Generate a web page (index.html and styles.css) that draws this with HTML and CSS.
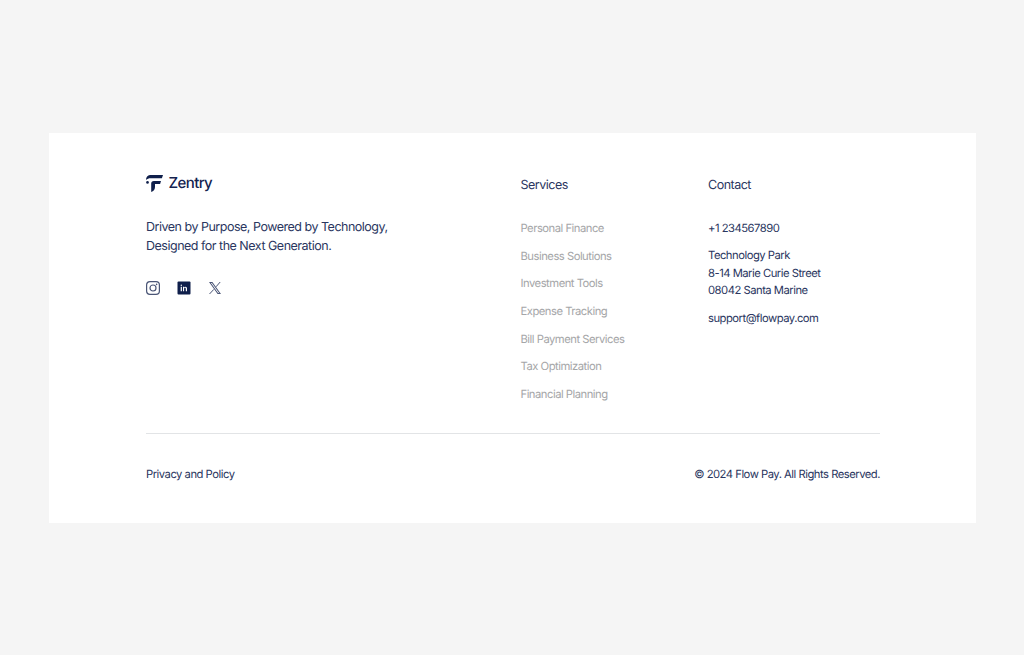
FILE: index.html
```html
<!DOCTYPE html>
<html lang="en">
<head>
<meta charset="utf-8">
<title>Zentry Footer</title>
<link rel="stylesheet" href="styles.css">
</head>
<body>
<footer class="footer">
  <div class="top">
    <div class="brand">
      <div class="logo">
        <svg class="logo-mark" viewBox="0 0 17 17" width="17" height="17" aria-hidden="true">
          <path d="M4 0H17l-1.100 3.200H4.500C2.800 3.200 1.200 3.700 0 5 0 2.200 1.600 0 4 0Z" fill="#0f1f4b"/>
          <path d="M7.800 6h7.200l-.9 3H9v3c0 2.600-1.500 4.300-3.800 5V8.600A2.600 2.600 0 0 1 7.800 6Z" fill="#0f1f4b"/>
          <circle cx="1.500" cy="7.400" r="1.300" fill="#0f1f4b"/>
        </svg>
        <span class="logo-name">Zentry</span>
      </div>
      <p class="tagline">Driven by Purpose, Powered by Technology,<br>Designed for the Next Generation.</p>
      <div class="social">
        <svg class="icon" viewBox="0 0 14 14" width="14" height="14" aria-label="Instagram">
          <rect x="0.6" y="0.6" width="12.8" height="12.8" rx="3.4" fill="none" stroke="#4a5576" stroke-width="1.200"/>
          <circle cx="7" cy="7" r="3" fill="none" stroke="#4a5576" stroke-width="1.200"/>
          <circle cx="10.6" cy="3.4" r="0.8" fill="#4a5576"/>
        </svg>
        <svg class="icon" viewBox="0 0 14 14" width="14" height="14" aria-label="LinkedIn">
          <rect width="13" height="13" x="0.5" y="0.5" rx="1" fill="#0f1f4b"/>
          <path d="M3.7 5.8h1.200v4.500H3.700ZM3.600 4.200a.7.7 0 1 1 1.400 0 .7.7 0 0 1-1.400 0ZM6 5.800h1.100v.6c.3-.4.7-.7 1.300-.7 1.200 0 1.600.8 1.600 1.900v2.700H8.800V7.900c0-.6-.2-1.100-.8-1.100s-.9.5-.9 1.100v2.400H6Z" fill="#fff"/>
        </svg>
        <svg class="icon" viewBox="0 0 14 14" width="14" height="14" aria-label="X">
          <path d="M1 1h3.400l8.600 12H9.600ZM2.900 2l7.200 10h1L3.900 2Z" fill="#4a5576" fill-rule="evenodd"/>
          <path d="M12.200 1 8 5.800M5.800 8.400 1.500 13" fill="none" stroke="#4a5576" stroke-width="1"/>
        </svg>
      </div>
    </div>
    <nav class="col services">
      <h3 class="col-title">Services</h3>
      <ul class="links">
        <li>Personal Finance</li>
        <li>Business Solutions</li>
        <li>Investment Tools</li>
        <li>Expense Tracking</li>
        <li>Bill Payment Services</li>
        <li>Tax Optimization</li>
        <li>Financial Planning</li>
      </ul>
    </nav>
    <div class="col contact">
      <h3 class="col-title">Contact</h3>
      <div class="contact-list">
        <p>+1 234567890</p>
        <p>Technology Park<br>8-14 Marie Curie Street<br>08042 Santa Marine</p>
        <p>support@flowpay.com</p>
      </div>
    </div>
  </div>
  <div class="bottom">
    <span>Privacy and Policy</span>
    <span>© 2024 Flow Pay. All Rights Reserved.</span>
  </div>
</footer>
</body>
</html>
```
FILE: styles.css
```css
* { box-sizing: border-box; }
html, body { margin: 0; padding: 0; }
body {
  width: 1024px;
  height: 655px;
  background: #f5f5f5;
  padding: 133px 48px 0 49px;
  font-family: Inter, "Liberation Sans", sans-serif;
  color: #2a3660;
  overflow: hidden;
  text-rendering: geometricPrecision;
}
.footer {
  background: #fff;
  width: 927px;
  height: 390px;
  padding: 41px 96px 0 97px;
}
.top {
  display: flex;
  height: 260px;
  border-bottom: 1px solid #e2e4e6;
}
.brand { width: 374.5px; }
.logo { display: flex; align-items: center; gap: 5.5px; height: 18px; }
.logo-mark { display: block; }
.logo-name {
  font-size: 15px;
  font-weight: 500;
  line-height: 18px;
  color: #14234f;
  letter-spacing: -0.6px;
}
.tagline {
  margin: 26px 0 0;
  font-size: 12.5px;
  line-height: 19px;
  letter-spacing: -0.49px;
}
.social { display: flex; gap: 17px; margin-top: 25px; }
.icon { display: block; }
.col-title {
  margin: 2px 0 0;
  font-size: 12.5px;
  font-weight: 400;
  line-height: 20px;
  letter-spacing: -0.5px;
}
.services { width: 187.5px; }
.links {
  list-style: none;
  margin: 23px 0 0;
  padding: 0;
  display: flex;
  flex-direction: column;
  gap: 9.7px;
  font-size: 11.25px;
  line-height: 18px;
  letter-spacing: -0.5px;
  color: #a5a6a8;
}
.contact-list {
  margin-top: 23.5px;
  display: flex;
  flex-direction: column;
  gap: 10.25px;
  font-size: 11.25px;
  line-height: 17.5px;
  letter-spacing: -0.5px;
}
.contact-list p { margin: 0; }
.bottom {
  display: flex;
  justify-content: space-between;
  margin-top: 30.5px;
  font-size: 11.25px;
  line-height: 18px;
  letter-spacing: -0.5px;
}
```
